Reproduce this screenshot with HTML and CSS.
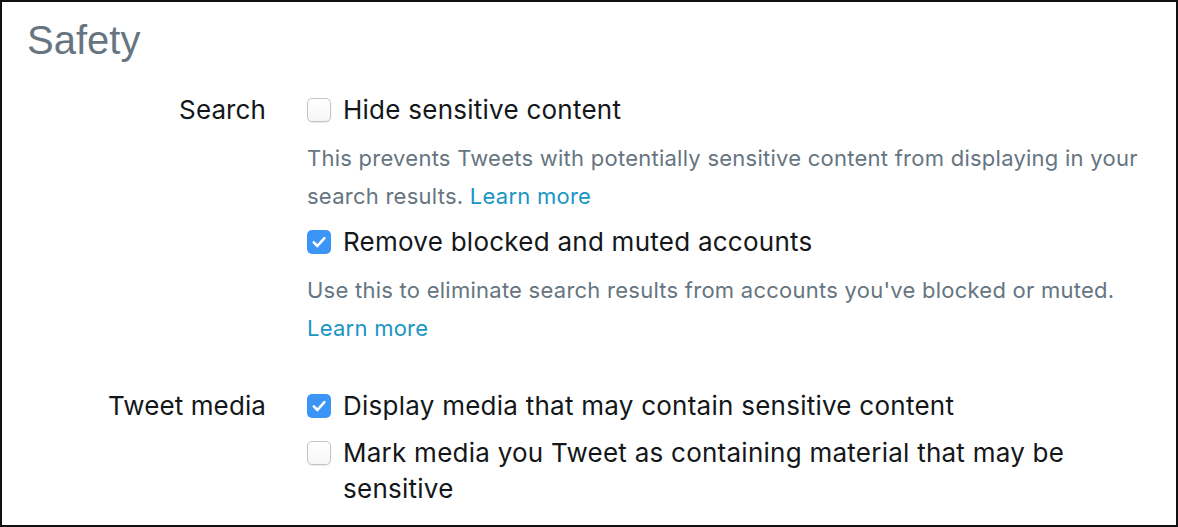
FILE: index.html
```html
<!DOCTYPE html>
<html lang="en">
<head>
<meta charset="utf-8">
<title>Safety</title>
<link rel="stylesheet" href="styles.css">
</head>
<body>
<div class="panel">
  <h1 class="title">Safety</h1>

  <div class="row">
    <div class="label">Search</div>
    <div class="controls">
      <div class="option">
        <span class="box"></span>
        <span class="text">Hide sensitive content</span>
      </div>
      <p class="desc">This prevents Tweets with potentially sensitive content from displaying in your search results. <a class="link" href="#">Learn more</a></p>
      <div class="option">
        <span class="box checked"><svg viewBox="0 0 24 24" width="24" height="24"><path d="M6.8 12.4 L10.4 16 L17.4 8.2" fill="none" stroke="#fff" stroke-width="2.6" stroke-linecap="round" stroke-linejoin="round"/></svg></span>
        <span class="text">Remove blocked and muted accounts</span>
      </div>
      <p class="desc">Use this to eliminate search results from accounts you've blocked or muted. <a class="link" href="#">Learn more</a></p>
    </div>
  </div>

  <div class="row">
    <div class="label">Tweet media</div>
    <div class="controls">
      <div class="option">
        <span class="box checked"><svg viewBox="0 0 24 24" width="24" height="24"><path d="M6.8 12.4 L10.4 16 L17.4 8.2" fill="none" stroke="#fff" stroke-width="2.6" stroke-linecap="round" stroke-linejoin="round"/></svg></span>
        <span class="text">Display media that may contain sensitive content</span>
      </div>
      <div class="option">
        <span class="box"></span>
        <span class="text">Mark media you Tweet as containing material that may be sensitive</span>
      </div>
    </div>
  </div>
</div>
</body>
</html>
```

FILE: styles.css
```css
html, body {
  margin: 0;
  padding: 0;
  background: #fff;
}

body {
  font-family: Inter, "Liberation Sans", Arial, sans-serif;
  color: #14171a;
}

.panel {
  box-sizing: border-box;
  width: 1178px;
  height: 527px;
  border: 2px solid #111;
  padding: 14px 28px 0 25px;
  overflow: hidden;
}

.title {
  margin: 0;
  font-family: "Liberation Sans", Arial, sans-serif;
  font-size: 40px;
  line-height: 48px;
  font-weight: normal;
  color: #66757f;
}

.row {
  display: grid;
  grid-template-columns: 239px 1fr;
  column-gap: 41px;
  margin-top: 28px;
}

.row + .row {
  margin-top: 41px;
}

.label {
  text-align: right;
  font-size: 26px;
  line-height: 36px;
  letter-spacing: 0.1px;
}

.controls {
  display: flex;
  flex-direction: column;
}

.option {
  display: flex;
  align-items: flex-start;
  gap: 12px;
  font-size: 26px;
  line-height: 36px;
  letter-spacing: 0.25px;
}

.option + .option {
  margin-top: 11px;
}

.box {
  flex: none;
  box-sizing: border-box;
  width: 24px;
  height: 24px;
  margin-top: 6px;
  border: 1px solid #c4c4c4;
  border-radius: 5px;
  background: linear-gradient(#fff, #f6f6f6);
  box-shadow: 0 1px 1px rgba(0, 0, 0, 0.08);
}

.box.checked {
  border: none;
  background: #3b95f7;
  box-shadow: none;
}

.box svg {
  display: block;
}

.desc {
  margin: 11px 0 9px;
  font-size: 22px;
  line-height: 38px;
  letter-spacing: 0.25px;
  color: #66757f;
}

.controls > .desc:last-child {
  margin-bottom: 0;
}

.link {
  color: #1b95c4;
  text-decoration: none;
}
```
